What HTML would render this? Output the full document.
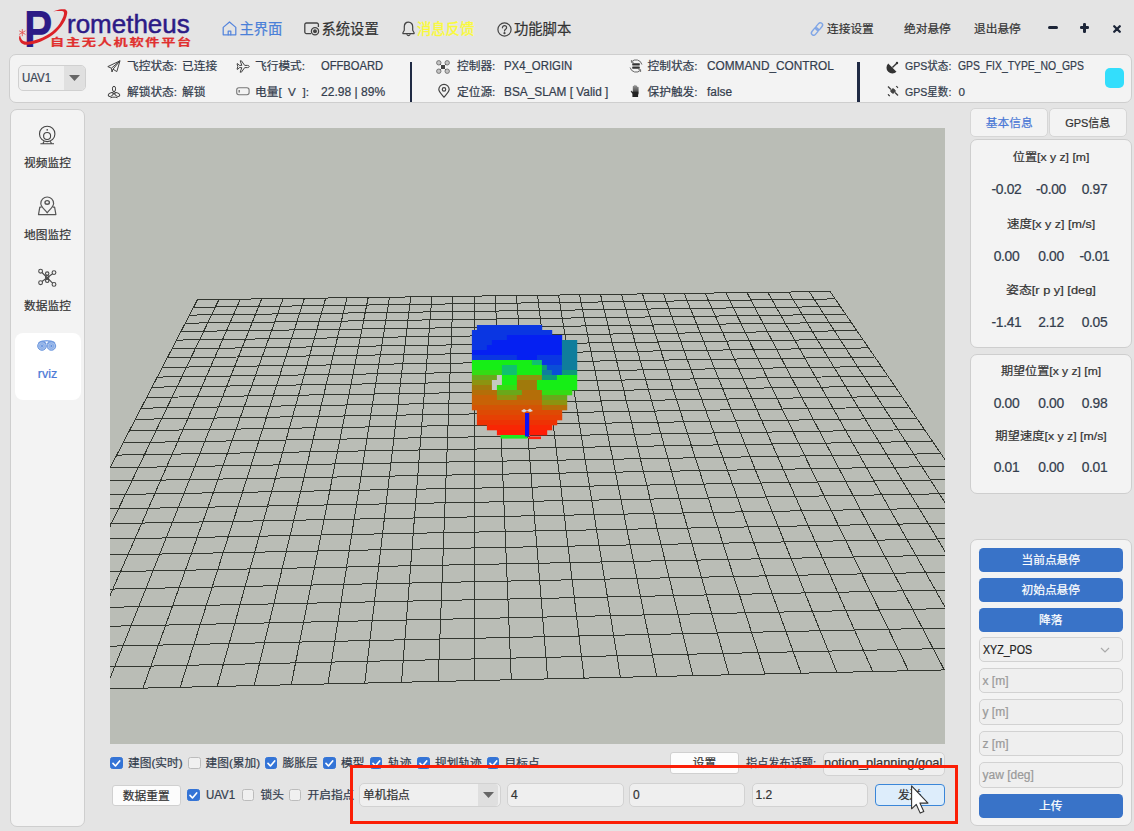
<!DOCTYPE html>
<html lang="zh">
<head>
<meta charset="utf-8">
<title>Prometheus 自主无人机软件平台</title>
<style>
*{box-sizing:border-box;margin:0;padding:0}
html,body{width:1134px;height:831px;overflow:hidden;background:#e4e4e4}
body{position:relative;-webkit-text-stroke:.22px currentColor;font-family:"Liberation Sans","Noto Sans CJK SC",sans-serif;color:#333d4d;font-size:12px}
.a{position:absolute;white-space:nowrap}
.t{position:absolute;white-space:nowrap;line-height:16px;height:16px;font-size:11.7px}
.panel{position:absolute;background:#f3f3f3;border:1px solid #cecece;border-radius:7px}
.nav{position:absolute;white-space:nowrap;font-size:14.3px;line-height:20px;height:20px;top:19px;color:#333}
.ic{position:absolute;overflow:visible}
.cb{position:absolute;width:12.6px;height:12.4px;border:1px solid #bcbcbc;border-radius:2.5px;background:#f0f0f0;margin-left:-.4px}
.cb.on{background:#3474d6;border-color:#3474d6}
.cb.on svg{position:absolute;left:0;top:0}
.btn{position:absolute;background:#3973c8;color:#fff;border-radius:4.5px;text-align:center;font-size:11.7px}
.inp{position:absolute;background:#efefef;border:1px solid #d2d2d2;border-radius:5px;font-size:12px;color:#9a9a9a;padding-left:3px}
.val{position:absolute;letter-spacing:-.3px;font-size:13.8px;line-height:18px;height:18px;width:50px;text-align:center;color:#333d4d}
.hd{position:absolute;font-size:11.7px;line-height:16px;height:16px;width:160px;left:971px;text-align:center;color:#333}
.sb{position:absolute;left:11px;width:73px;text-align:center;font-size:11.7px;line-height:16px;color:#333}
</style>
</head>
<body>
<div class="a" id="logoP" style="left:24.3px;top:1px;font-size:51.8px;line-height:56px;font-weight:700;color:#2c1a86;transform-origin:0 0;transform:scaleX(0.82)">P</div>
<div class="a" id="logoT" style="left:67.2px;top:5.5px;font-size:26.6px;line-height:36px;color:#2c1a86;transform-origin:0 0;transform:scaleX(0.977);-webkit-text-stroke:0.5px #2c1a86">rometheus</div>
<div class="a" id="logoC" style="left:50.3px;top:36.3px;font-size:10px;line-height:13px;font-weight:700;color:#e0302f;transform-origin:0 0;transform:scaleX(1.42);letter-spacing:1.18px">自主无人机软件平台</div>
<svg class="ic" style="left:14px;top:4px" width="60" height="48" viewBox="14 4 60 48"><path d="M53.2 11.3C54.2 11.0 57.5 9.9 59.4 9.5C61.3 9.2 63.4 9.0 64.7 9.3C65.9 9.5 66.5 10.2 66.9 11.0C67.3 11.8 67.4 12.6 67.1 14.1C66.8 15.7 66.1 18.2 65.1 20.3C64.1 22.3 62.7 24.5 61.1 26.5C59.6 28.4 57.9 30.3 55.9 32.2C53.8 34.0 51.3 35.9 48.8 37.5C46.3 39.0 43.5 40.3 40.9 41.4C38.2 42.5 35.4 43.5 32.9 44.1C30.4 44.7 27.8 44.9 25.9 44.8C24.0 44.7 22.6 44.1 21.5 43.2C20.4 42.4 19.6 40.8 19.3 39.7C18.9 38.6 19.1 37.3 19.3 36.6C19.4 35.9 20.0 35.5 20.1 35.3L20.1 35.3C20.3 35.9 20.7 37.9 21.3 38.8C21.8 39.7 22.3 40.4 23.4 40.9C24.5 41.4 25.8 41.8 27.6 41.7C29.5 41.6 32.2 41.0 34.7 40.3C37.2 39.6 40.1 38.5 42.6 37.4C45.1 36.3 47.6 35.0 49.7 33.5C51.8 32.1 53.7 30.3 55.4 28.7C57.1 27.0 58.6 25.2 59.8 23.4C61.1 21.5 62.2 19.3 62.9 17.6C63.6 15.9 64.0 14.3 64.0 13.2C64.0 12.2 63.7 11.7 62.9 11.3C62.1 10.9 61.0 11.0 59.4 11.0C57.8 11.0 54.2 11.2 53.2 11.3Z" fill="#dc2228"/><path d="M22.3 29.4v6.4M19.5 31l5.6 3.2M19.5 34.2l5.6-3.2" stroke="#e85050" stroke-width=".9" stroke-linecap="round"/></svg>

<svg class="ic" style="left:222px;top:21px" width="15" height="15" viewBox="0 0 15 15" fill="none" stroke="#5585dc" stroke-width="1.250" stroke-linejoin="round" stroke-linecap="round"><path d="M1.2 6.4L7.5 1l6.3 5.4v7.4H1.2z"/><path d="M6.2 13.8v-3.8h2.6v3.8"/></svg>
<div class="nav" style="left:239.5px;color:#4a80d8">主界面</div>
<svg class="ic" style="left:304px;top:22px" width="16" height="14" viewBox="0 0 16 14" fill="none" stroke="#444" stroke-width="1.3"><path d="M7 11.6H2.4a1.6 1.6 0 0 1-1.6-1.6V2.6A1.6 1.6 0 0 1 2.4 1h10.4a1.6 1.6 0 0 1 1.6 1.6V5"/><circle cx="11" cy="9.3" r="3.6"/><circle cx="11" cy="9.3" r="1.3" fill="#444"/></svg>
<div class="nav" style="left:321.5px">系统设置</div>
<svg class="ic" style="left:402px;top:21px" width="13" height="16" viewBox="0 0 13 16" fill="none" stroke="#444" stroke-width="1.2" stroke-linejoin="round"><path d="M6.5 1.2c-2.6 0-4.2 2-4.2 4.5v3.6L.9 11.8v.8h11.2v-.8l-1.4-2.5V5.7c0-2.5-1.6-4.5-4.2-4.5z"/><path d="M5 13.6a1.6 1.6 0 0 0 3 0" stroke-linecap="round"/></svg>
<div class="nav" style="left:417px;color:#fafa38;-webkit-text-stroke:.35px #fafa38">消息反馈</div>
<svg class="ic" style="left:497px;top:21.5px" width="15" height="15" viewBox="0 0 15 15" fill="none" stroke="#444" stroke-width="1.2"><circle cx="7.5" cy="7.5" r="6.6"/><path d="M5.4 5.8c0-1.3 1-2.1 2.1-2.1s2.1.8 2.1 2c0 1.5-2.1 1.6-2.1 3.3" stroke-linecap="round"/><circle cx="7.5" cy="11.2" r=".5" fill="#444"/></svg>
<div class="nav" style="left:514px">功能脚本</div>
<svg class="ic" style="left:810px;top:22px" width="14" height="14" viewBox="0 0 14 14" fill="none" stroke="#7fa5e6" stroke-width="1.4"><g transform="rotate(-50 7 7)"><rect x="-.4" y="4.7" width="8.2" height="4.6" rx="2.3"/><rect x="6.2" y="4.7" width="8.2" height="4.6" rx="2.3"/></g></svg>
<div class="t" style="left:827px;top:21px;color:#333">连接设置</div>
<div class="t" style="left:904px;top:21px;color:#333">绝对悬停</div>
<div class="t" style="left:974px;top:21px;color:#333">退出悬停</div>
<div class="a" style="left:1048px;top:26.2px;width:9.6px;height:3.2px;background:#1c2538;border-radius:1.5px"></div>
<div class="a" style="left:1080px;top:26.4px;width:9.4px;height:2.8px;background:#1c2538;border-radius:1.2px"></div>
<div class="a" style="left:1083.3px;top:23px;width:2.8px;height:9.6px;background:#1c2538;border-radius:1.2px"></div>
<svg class="ic" style="left:1113px;top:24.5px" width="8" height="8" viewBox="0 0 8 8" stroke="#1c2538" stroke-width="2.3" stroke-linecap="round"><path d="M1.2 1.2l5.6 5.6M6.8 1.2L1.2 6.8"/></svg>

<div class="panel" style="left:9px;top:53.5px;width:1123px;height:49.5px"></div>
<div class="a" style="left:18px;top:65px;width:68px;height:25.5px;border:1px solid #d0d0d0;border-radius:5px;background:#f0f0f0"></div>
<div class="a" style="left:64px;top:66px;width:21px;height:23.5px;background:#e0e0e0;border-radius:0 4px 4px 0"></div>
<div class="t" style="transform:scaleX(0.957);transform-origin:0 50%;left:22px;top:69.5px;font-size:12px;color:#3b4656">UAV1</div>
<svg class="ic" style="left:68.5px;top:75px" width="11" height="6" viewBox="0 0 11 6"><path d="M0 0h11L5.5 6z" fill="#666"/></svg>

<svg class="ic" style="left:107px;top:60px" width="14" height="13" viewBox="0 0 14 13" fill="none" stroke="#444" stroke-width="1" stroke-linejoin="round"><path d="M13 .8L.8 6.6l3.6 1.6zM13 .8L6 9.2l3.8 2.4zM4.4 8.2L5 12l1-2.8"/></svg>
<div class="t" style="left:127px;top:58px">飞控状态:</div>
<div class="t" style="left:182px;top:58px">已连接</div>
<svg class="ic" style="left:107px;top:84.5px" width="14" height="14" viewBox="0 0 14 14" fill="none" stroke="#444" stroke-width="1"><g transform="translate(7 7.6)"><circle r="1.2"/><ellipse cx="0" cy="-3.7" rx="1.6" ry="2.7"/><ellipse cx="0" cy="-3.7" rx="1.6" ry="2.7" transform="rotate(120)"/><ellipse cx="0" cy="-3.7" rx="1.6" ry="2.7" transform="rotate(240)"/></g><path d="M3.4 12.8c2.4-.9 4.8-.9 7.2 0"/></svg>
<div class="t" style="left:127px;top:83.7px">解锁状态:</div>
<div class="t" style="left:182px;top:83.7px">解锁</div>

<svg class="ic" style="left:236px;top:60px" width="14" height="13" viewBox="0 0 14 13" fill="none" stroke="#444" stroke-width="1" stroke-linejoin="round"><path d="M13.2 6.5c0-.8-.9-1.1-1.7-1.1H8.7L5.4.8H4.2l1.6 4.6H3.3L2 3.8H1l.8 2.7L1 9.2h1l1.3-1.6h2.5L4.2 12.2h1.2l3.3-4.6h2.8c.8 0 1.7-.3 1.7-1.1z"/></svg>
<div class="t" style="left:255px;top:58px">飞行模式:</div>
<div class="t" style="transform:scaleX(0.91);transform-origin:0 50%;left:321px;top:58px;font-size:12.3px">OFFBOARD</div>
<svg class="ic" style="left:236px;top:86.5px" width="14" height="9" viewBox="0 0 14 9" fill="none" stroke="#777" stroke-width="1.1"><rect x=".7" y=".7" width="12.4" height="7" rx="2.2"/><path d="M3.2 3v2.4" stroke-width="1.4"/></svg>
<div class="t" style="left:255px;top:83.7px">电量[&nbsp; V &nbsp;]:</div>
<div class="t" style="transform:scaleX(0.98);transform-origin:0 50%;left:321px;top:83.7px;font-size:12.3px">22.98 | 89%</div>

<div class="a" style="left:409.6px;top:62px;width:2.8px;height:40px;background:#1f2a44"></div>

<svg class="ic" style="left:436px;top:59.5px" width="14" height="14" viewBox="0 0 14 14" fill="none" stroke="#555" stroke-width="1"><g fill="#c4c4c4" stroke="#777"><circle cx="2.8" cy="2.8" r="2.2"/><circle cx="11.2" cy="2.8" r="2.2"/><circle cx="2.8" cy="11.2" r="2.2"/><circle cx="11.2" cy="11.2" r="2.2"/></g><path d="M4.2 4.2l5.6 5.6M9.8 4.2L4.2 9.8"/><rect x="5" y="5" width="4" height="4" fill="#444" stroke="none"/></svg>
<div class="t" style="left:457px;top:58px">控制器:</div>
<div class="t" style="transform:scaleX(0.926);transform-origin:0 50%;left:503.5px;top:58px;font-size:12.3px">PX4_ORIGIN</div>
<svg class="ic" style="left:437.5px;top:84px" width="12" height="14" viewBox="0 0 12 14" fill="none" stroke="#444" stroke-width="1.2"><path d="M6 13.2C3 9.6.8 7.6.8 5.6a5.2 5.2 0 0 1 10.4 0c0 2-2.2 4-5.2 7.6z"/><circle cx="6" cy="5.4" r="1.7"/></svg>
<div class="t" style="left:457px;top:83.7px">定位源:</div>
<div class="t" style="transform:scaleX(0.962);transform-origin:0 50%;left:503.5px;top:83.7px;font-size:12.3px">BSA_SLAM [ Valid ]</div>

<svg class="ic" style="left:629px;top:58.8px" width="14" height="14" viewBox="0 0 14 14" fill="none" stroke="#666" stroke-width="1"><path d="M2.3 3A6.1 6.1 0 0 1 12.9 5.5M11.7 11A6.1 6.1 0 0 1 1.1 8.5"/><path d="M2.4 1v2.3h2.3M11.6 13v-2.3H9.3" stroke-width=".9"/><rect x="3.2" y="4.3" width="7.6" height="2.1" rx=".4" fill="#333" stroke="none"/><rect x="3.2" y="7.6" width="7.6" height="2.1" rx=".4" fill="#333" stroke="none"/></svg>
<div class="t" style="left:647.5px;top:58px">控制状态:</div>
<div class="t" style="transform:scaleX(0.962);transform-origin:0 50%;left:706.5px;top:58px;font-size:12.3px">COMMAND_CONTROL</div>
<svg class="ic" style="left:629.5px;top:84.2px" width="11" height="14" viewBox="0 0 11 14"><defs><linearGradient id="hg" x1="0" y1="0" x2="0" y2="1"><stop offset="0" stop-color="#999"/><stop offset=".5" stop-color="#555"/><stop offset=".62" stop-color="#222"/><stop offset="1" stop-color="#222"/></linearGradient></defs><path d="M2.4 13V9.8L.9 7.8c-.5-.7.4-1.4 1-.8l.9.9V2.4c0-1 1.4-1 1.4 0V1.5c0-1 1.5-1 1.5 0v.8c0-1 1.5-1 1.5 0v1c0-.9 1.4-.9 1.4 0V9.6l-.5 1.4v2z" fill="url(#hg)"/></svg>
<div class="t" style="left:647.5px;top:83.7px">保护触发:</div>
<div class="t" style="transform:scaleX(0.966);transform-origin:0 50%;left:706.5px;top:83.7px;font-size:12.3px">false</div>

<div class="a" style="left:857.2px;top:62px;width:2.8px;height:40px;background:#1f2a44"></div>

<svg class="ic" style="left:886.5px;top:60.5px" width="12" height="12" viewBox="0 0 12 12"><path d="M1.2 2.5A5.8 5.8 0 0 0 9.5 10.8z" fill="#333"/><path d="M5.4 6.6L9.8 2.2" stroke="#333" stroke-width="1.4"/><circle cx="10" cy="2" r="1.2" fill="#333"/></svg>
<div class="t" style="transform:scaleX(0.903);transform-origin:0 50%;left:905px;top:58px">GPS状态:</div>
<div class="t" style="transform:scaleX(0.845);transform-origin:0 50%;left:958px;top:58px;font-size:12.3px">GPS_FIX_TYPE_NO_GPS</div>
<svg class="ic" style="left:886.5px;top:85px" width="12" height="12" viewBox="0 0 12 12" fill="none" stroke="#444" stroke-width="1.2"><path d="M1 1.5l3 3M8 7.5l3 3M4.5 7.5l3-3" stroke-width="1.4"/><rect x="3.8" y="3.8" width="4.4" height="4.4" transform="rotate(45 6 6)" fill="#444" stroke="none"/><path d="M1.2 9.2c.2 1 .8 1.5 1.7 1.7M9 1.2c1 .3 1.6.9 1.8 1.8"/></svg>
<div class="t" style="transform:scaleX(0.903);transform-origin:0 50%;left:905px;top:83.7px">GPS星数:</div>
<div class="t" style="left:958.5px;top:83.7px">0</div>
<div class="a" style="left:1104.5px;top:68px;width:19.5px;height:19.5px;border-radius:5px;background:#33defc"></div>

<div class="panel" style="left:10px;top:109px;width:74.5px;height:717.5px"></div>
<svg class="ic" style="left:38px;top:124.5px" width="19" height="20" viewBox="0 0 19 20" fill="none" stroke="#444" stroke-width="1.1"><circle cx="9.2" cy="8.9" r="7.7"/><circle cx="9.1" cy="11" r="3.5"/><circle cx="9.2" cy="4.9" r=".8" fill="#444" stroke="none"/><path d="M6.2 16.2L5 18.3M12.2 16.2L13.4 18.3M2.4 18.7H16" stroke-linejoin="round"/></svg>
<div class="sb" style="top:154.5px">视频监控</div>
<svg class="ic" style="left:38px;top:196px" width="19" height="20" viewBox="0 0 19 20" fill="none" stroke="#555" stroke-width="1.2" stroke-linejoin="round"><path d="M9.2 16.8C5.5 12.4 2.8 10.4 2.8 7.4a6.4 6.4 0 0 1 12.8 0c0 3-2.7 5-6.4 9.4z"/><ellipse cx="9.2" cy="6.4" rx="2.2" ry="1.8" stroke-width="1.4"/><path d="M3.6 11.2H1.8L.5 18.6h17.4l-1.3-7.4h-1.8"/></svg>
<div class="sb" style="top:226.5px">地图监控</div>
<svg class="ic" style="left:38px;top:268px" width="19" height="20" viewBox="0 0 19 20" fill="none" stroke="#4a4a4a" stroke-width="1.1"><circle cx="2.6" cy="3.2" r="1.9"/><circle cx="16" cy="4.6" r="1.9"/><circle cx="2.6" cy="14.7" r="1.9"/><circle cx="16" cy="16.4" r="1.9"/><circle cx="9.2" cy="5.6" r="1.7"/><circle cx="9.2" cy="9.2" r="1.7"/><circle cx="9.2" cy="12.8" r="1.7"/><path d="M4 4.5L14.6 15.2M14.6 5.8L4 13.5"/></svg>
<div class="sb" style="top:298px">数据监控</div>
<div class="a" style="left:14.5px;top:333px;width:66.5px;height:67px;border-radius:8px;background:#fff"></div>
<svg class="ic" style="left:37px;top:339px" width="20" height="13" viewBox="0 0 20 13"><path d="M1 3.4C3.5 1.8 6.6 1 9.7 1s6.2.8 8.7 2.4l-2 1.5H3z" fill="#7ea4e4"/><path d="M8.2 2.6L9.7 5l1.5-2.4z" fill="#fff"/><circle cx="5" cy="7" r="4.3" fill="#a4c0ec" stroke="#6b96de" stroke-width="1"/><circle cx="14.4" cy="7" r="4.3" fill="#a4c0ec" stroke="#6b96de" stroke-width="1"/><circle cx="5" cy="7" r="2.3" fill="none" stroke="#7ea4e4" stroke-width=".7"/><circle cx="14.4" cy="7" r="2.3" fill="none" stroke="#7ea4e4" stroke-width=".7"/><circle cx="5" cy="7" r=".9" fill="#5b8bdb"/><circle cx="14.4" cy="7" r=".9" fill="#5b8bdb"/></svg>
<div class="sb" style="top:366px;color:#4a78d6;font-size:12.5px">rviz</div>

<div class="a" style="left:110px;top:127.7px;width:835px;height:616.8px;background:#babdb6;overflow:hidden">
<svg class="ic" style="left:0;top:.3px" width="835" height="617" viewBox="110 128 835 617">
<path d="M197.5 299.7L-6.2 691.5M197.5 299.7L830.1 291.5M219.0 299.4L31.2 690.6M193.6 307.3L835.2 298.9M240.4 299.1L68.5 689.8M189.5 315.1L840.4 306.5M261.7 298.8L105.8 688.9M185.3 323.2L845.7 314.3M283.1 298.6L143.0 688.1M181.0 331.5L851.2 322.3M304.4 298.3L180.2 687.2M176.5 340.1L856.8 330.6M325.7 298.0L217.2 686.4M171.9 348.9L862.7 339.1M347.0 297.7L254.2 685.6M167.2 358.0L868.7 347.9M368.2 297.5L291.2 684.7M162.3 367.4L874.9 357.0M389.5 297.2L328.0 683.9M157.2 377.1L881.3 366.4M410.7 296.9L364.8 683.1M152.0 387.2L887.9 376.0M431.9 296.6L401.5 682.2M146.6 397.5L894.7 386.0M453.0 296.4L438.2 681.4M141.1 408.2L901.8 396.3M474.2 296.1L474.8 680.6M135.3 419.3L909.1 407.0M495.3 295.8L511.3 679.7M129.3 430.8L916.6 418.1M516.4 295.5L547.7 678.9M123.1 442.7L924.4 429.5M537.5 295.3L584.1 678.1M116.7 455.1L932.5 441.3M558.5 295.0L620.4 677.2M110.1 467.8L940.9 453.6M579.5 294.7L656.7 676.4M103.2 481.1L949.6 466.3M600.5 294.4L692.9 675.6M96.0 494.9L958.6 479.5M621.5 294.2L729.0 674.8M88.5 509.3L968.0 493.3M642.5 293.9L765.0 674.0M80.8 524.2L977.7 507.5M663.4 293.6L801.0 673.1M72.7 539.7L987.9 522.4M684.3 293.4L836.9 672.3M64.3 555.9L998.4 537.8M705.2 293.1L872.8 671.5M55.5 572.8L1009.4 553.9M726.1 292.8L908.5 670.7M46.3 590.4L1020.9 570.7M747.0 292.6L944.3 669.9M36.8 608.8L1032.9 588.2M767.8 292.3L979.9 669.1M26.8 628.0L1045.4 606.5M788.6 292.0L1015.5 668.3M16.3 648.2L1058.4 625.6M809.4 291.8L1051.0 667.5M5.3 669.3L1072.1 645.7M830.1 291.5L1086.5 666.7M-6.2 691.5L1086.5 666.7" fill="none" shape-rendering="crispEdges" stroke="#32362f" stroke-width="1.0"/>
<rect x="476.9" y="325.0" width="65.3" height="5.3" fill="#0a36e2"/>
<rect x="471.9" y="330.0" width="80.3" height="5.3" fill="#0a36e2"/>
<rect x="471.9" y="335.0" width="35.3" height="5.3" fill="#0a36e2"/>
<rect x="506.9" y="335.0" width="55.3" height="5.3" fill="#0520f2"/>
<rect x="471.9" y="340.0" width="20.3" height="5.3" fill="#0a36e2"/>
<rect x="491.9" y="340.0" width="70.3" height="5.3" fill="#0520f2"/>
<rect x="561.9" y="340.0" width="15.3" height="5.3" fill="#0f7d9c"/>
<rect x="471.9" y="345.0" width="15.3" height="5.3" fill="#0a36e2"/>
<rect x="486.9" y="345.0" width="75.3" height="5.3" fill="#0520f2"/>
<rect x="561.9" y="345.0" width="15.3" height="5.3" fill="#0f7d9c"/>
<rect x="471.9" y="350.0" width="90.3" height="5.3" fill="#0520f2"/>
<rect x="561.9" y="350.0" width="15.3" height="5.3" fill="#0f7d9c"/>
<rect x="471.9" y="355.0" width="45.3" height="5.3" fill="#0a36e2"/>
<rect x="516.9" y="355.0" width="20.3" height="5.3" fill="#0520f2"/>
<rect x="536.9" y="355.0" width="25.3" height="5.3" fill="#0a36e2"/>
<rect x="561.9" y="355.0" width="15.3" height="5.3" fill="#0f7d9c"/>
<rect x="471.9" y="360.0" width="60.3" height="5.3" fill="#16ee16"/>
<rect x="531.9" y="360.0" width="10.3" height="5.3" fill="#10c070"/>
<rect x="541.9" y="360.0" width="20.3" height="5.3" fill="#0a36e2"/>
<rect x="561.9" y="360.0" width="15.3" height="5.3" fill="#0f7d9c"/>
<rect x="471.9" y="365.0" width="30.3" height="5.3" fill="#16ee16"/>
<rect x="501.9" y="365.0" width="15.3" height="5.3" fill="#10c070"/>
<rect x="516.9" y="365.0" width="25.3" height="5.3" fill="#16ee16"/>
<rect x="541.9" y="365.0" width="5.3" height="5.3" fill="#0c9a78"/>
<rect x="546.9" y="365.0" width="15.3" height="5.3" fill="#0a4ed6"/>
<rect x="561.9" y="365.0" width="15.3" height="5.3" fill="#0f7d9c"/>
<rect x="471.9" y="370.0" width="30.3" height="5.3" fill="#34dc14"/>
<rect x="501.9" y="370.0" width="15.3" height="5.3" fill="#10c070"/>
<rect x="516.9" y="370.0" width="25.3" height="5.3" fill="#16ee16"/>
<rect x="541.9" y="370.0" width="10.3" height="5.3" fill="#0f7d9c"/>
<rect x="551.9" y="370.0" width="10.3" height="5.3" fill="#0a4ed6"/>
<rect x="561.9" y="370.0" width="15.3" height="5.3" fill="#0c9a78"/>
<rect x="471.9" y="375.0" width="25.3" height="5.3" fill="#6aa81a"/>
<rect x="496.9" y="375.0" width="5.3" height="5.3" fill="#c6c9c2"/>
<rect x="501.9" y="375.0" width="15.3" height="5.3" fill="#16ee16"/>
<rect x="516.9" y="375.0" width="25.3" height="5.3" fill="#8c9410"/>
<rect x="541.9" y="375.0" width="15.3" height="5.3" fill="#0c9a78"/>
<rect x="556.9" y="375.0" width="20.3" height="5.3" fill="#16ee16"/>
<rect x="471.9" y="380.0" width="20.3" height="5.3" fill="#8c9410"/>
<rect x="491.9" y="380.0" width="10.3" height="5.3" fill="#c6c9c2"/>
<rect x="501.9" y="380.0" width="15.3" height="5.3" fill="#16ee16"/>
<rect x="516.9" y="380.0" width="20.3" height="5.3" fill="#a07a0c"/>
<rect x="536.9" y="380.0" width="40.3" height="5.3" fill="#16ee16"/>
<rect x="471.9" y="385.0" width="20.3" height="5.3" fill="#a07a0c"/>
<rect x="491.9" y="385.0" width="5.3" height="5.3" fill="#c6c9c2"/>
<rect x="496.9" y="385.0" width="20.3" height="5.3" fill="#34dc14"/>
<rect x="516.9" y="385.0" width="20.3" height="5.3" fill="#a07a0c"/>
<rect x="536.9" y="385.0" width="40.3" height="5.3" fill="#16ee16"/>
<rect x="471.9" y="390.0" width="25.3" height="5.3" fill="#b46e08"/>
<rect x="496.9" y="390.0" width="25.3" height="5.3" fill="#6aa81a"/>
<rect x="521.9" y="390.0" width="20.3" height="5.3" fill="#b46e08"/>
<rect x="541.9" y="390.0" width="30.3" height="5.3" fill="#34dc14"/>
<rect x="471.9" y="395.0" width="25.3" height="5.3" fill="#c86206"/>
<rect x="496.9" y="395.0" width="20.3" height="5.3" fill="#8c9410"/>
<rect x="516.9" y="395.0" width="25.3" height="5.3" fill="#b46e08"/>
<rect x="541.9" y="395.0" width="25.3" height="5.3" fill="#6aa81a"/>
<rect x="471.9" y="400.0" width="20.3" height="5.3" fill="#c86206"/>
<rect x="491.9" y="400.0" width="50.3" height="5.3" fill="#c86206"/>
<rect x="541.9" y="400.0" width="25.3" height="5.3" fill="#8c9410"/>
<rect x="471.9" y="405.0" width="70.3" height="5.3" fill="#d45405"/>
<rect x="541.9" y="405.0" width="25.3" height="5.3" fill="#b46e08"/>
<rect x="476.9" y="410.0" width="85.3" height="5.3" fill="#de4a04"/>
<rect x="476.9" y="415.0" width="85.3" height="5.3" fill="#e64004"/>
<rect x="476.9" y="420.0" width="80.3" height="5.3" fill="#ee3204"/>
<rect x="486.9" y="425.0" width="65.3" height="5.3" fill="#f82604"/>
<rect x="496.9" y="430.0" width="50.3" height="5.3" fill="#ff1c06"/>
<rect x="500.5" y="435" width="27" height="3.6" fill="#20e820"/>
<rect x="528.5" y="436.5" width="12.5" height="2.6" fill="#ff2010"/>
<rect x="525" y="413" width="4.2" height="23.5" fill="#1010f0"/>
<path d="M521 411l3-2 3 1.5 3-2 3 2.5-3 1-3-1-3 1.5z" fill="#d8d8d8"/>
</svg></div>
<div class="a" style="left:970px;top:108px;width:78px;height:28.5px;background:#f3f3f3;border:1px solid #d6d6d6;border-radius:5px"></div>
<div class="a" style="left:1048.8px;top:108px;width:78px;height:28.5px;background:#f3f3f3;border:1px solid #d6d6d6;border-radius:5px"></div>
<div class="t" style="left:970.5px;width:77.5px;text-align:center;top:114.5px;color:#4a78d6">基本信息</div>
<div class="t" style="transform:scaleX(0.94);transform-origin:50% 50%;left:1049px;width:77.5px;text-align:center;top:114.5px;color:#333">GPS信息</div>
<div class="panel" style="left:970px;top:139px;width:161.5px;height:209.3px"></div>
<div class="hd" style="transform:scaleX(1.045);transform-origin:50% 50%;top:148.5px">位置[x y z] [m]</div>
<div class="val" style="left:981.5px;top:180.5px">-0.02</div><div class="val" style="left:1026px;top:180.5px">-0.00</div><div class="val" style="left:1069.5px;top:180.5px">0.97</div>
<div class="hd" style="transform:scaleX(1.07);transform-origin:50% 50%;top:215.5px">速度[x y z] [m/s]</div>
<div class="val" style="left:981.5px;top:247.5px">0.00</div><div class="val" style="left:1026px;top:247.5px">0.00</div><div class="val" style="left:1069.5px;top:247.5px">-0.01</div>
<div class="hd" style="transform:scaleX(1.097);transform-origin:50% 50%;top:281.5px">姿态[r p y] [deg]</div>
<div class="val" style="left:981.5px;top:313.5px">-1.41</div><div class="val" style="left:1026px;top:313.5px">2.12</div><div class="val" style="left:1069.5px;top:313.5px">0.05</div>
<div class="panel" style="left:970px;top:353.8px;width:161.5px;height:139.8px"></div>
<div class="hd" style="transform:scaleX(1.036);transform-origin:50% 50%;top:363px">期望位置[x y z] [m]</div>
<div class="val" style="left:981.5px;top:395px">0.00</div><div class="val" style="left:1026px;top:395px">0.00</div><div class="val" style="left:1069.5px;top:395px">0.98</div>
<div class="hd" style="transform:scaleX(1.053);transform-origin:50% 50%;top:427.5px">期望速度[x y z] [m/s]</div>
<div class="val" style="left:981.5px;top:459px">0.01</div><div class="val" style="left:1026px;top:459px">0.00</div><div class="val" style="left:1069.5px;top:459px">0.01</div>
<div class="panel" style="left:970px;top:539px;width:161.5px;height:287.3px"></div>
<div class="btn" style="left:978.5px;top:548px;width:144.5px;height:23.6px;line-height:23.6px">当前点悬停</div>
<div class="btn" style="left:978.5px;top:578px;width:144.5px;height:23.6px;line-height:23.6px">初始点悬停</div>
<div class="btn" style="left:978.5px;top:608px;width:144.5px;height:23.6px;line-height:23.6px">降落</div>
<div class="inp" style="left:978.5px;top:636.8px;width:144.5px;height:25.5px;line-height:24.5px;color:#222;font-size:12.3px"><span style="display:inline-block;transform:scaleX(.865);transform-origin:0 50%">XYZ_POS</span></div>
<svg class="ic" style="left:1100px;top:646.5px" width="10" height="6" viewBox="0 0 10 6" fill="none" stroke="#aaa" stroke-width="1.2"><path d="M1 1l4 4 4-4"/></svg>
<div class="inp" style="left:978.5px;top:667.8px;width:144.5px;height:25.5px;line-height:24.5px">x [m]</div>
<div class="inp" style="left:978.5px;top:699.3px;width:144.5px;height:25.5px;line-height:24.5px">y [m]</div>
<div class="inp" style="left:978.5px;top:730.8px;width:144.5px;height:25.5px;line-height:24.5px">z [m]</div>
<div class="inp" style="left:978.5px;top:762.3px;width:144.5px;height:25.5px;line-height:24.5px">yaw [deg]</div>
<div class="btn" style="left:978.5px;top:794.3px;width:144.5px;height:23.6px;line-height:23.6px">上传</div>

<div class="cb on" style="left:110.5px;top:757px"><svg width="10.5" height="10.5" viewBox="0 0 12 12" fill="none" stroke="#fff" stroke-width="1.9" stroke-linecap="round" stroke-linejoin="round"><path d="M2.3 6.2l2.8 2.9 4.8-5.7"/></svg></div><div class="t" style="left:128px;top:755px">建图(实时)</div>
<div class="cb" style="left:188.5px;top:757px"></div><div class="t" style="left:205.5px;top:755px">建图(累加)</div>
<div class="cb on" style="left:265px;top:757px"><svg width="10.5" height="10.5" viewBox="0 0 12 12" fill="none" stroke="#fff" stroke-width="1.9" stroke-linecap="round" stroke-linejoin="round"><path d="M2.3 6.2l2.8 2.9 4.8-5.7"/></svg></div><div class="t" style="left:282.5px;top:755px">膨胀层</div>
<div class="cb on" style="left:323.5px;top:757px"><svg width="10.5" height="10.5" viewBox="0 0 12 12" fill="none" stroke="#fff" stroke-width="1.9" stroke-linecap="round" stroke-linejoin="round"><path d="M2.3 6.2l2.8 2.9 4.8-5.7"/></svg></div><div class="t" style="left:341px;top:755px">模型</div>
<div class="cb on" style="left:370px;top:757px"><svg width="10.5" height="10.5" viewBox="0 0 12 12" fill="none" stroke="#fff" stroke-width="1.9" stroke-linecap="round" stroke-linejoin="round"><path d="M2.3 6.2l2.8 2.9 4.8-5.7"/></svg></div><div class="t" style="left:388px;top:755px">轨迹</div>
<div class="cb on" style="left:417.5px;top:757px"><svg width="10.5" height="10.5" viewBox="0 0 12 12" fill="none" stroke="#fff" stroke-width="1.9" stroke-linecap="round" stroke-linejoin="round"><path d="M2.3 6.2l2.8 2.9 4.8-5.7"/></svg></div><div class="t" style="left:435px;top:755px">规划轨迹</div>
<div class="cb on" style="left:487px;top:757px"><svg width="10.5" height="10.5" viewBox="0 0 12 12" fill="none" stroke="#fff" stroke-width="1.9" stroke-linecap="round" stroke-linejoin="round"><path d="M2.3 6.2l2.8 2.9 4.8-5.7"/></svg></div><div class="t" style="left:504.5px;top:755px">目标点</div>
<div class="a" style="left:670px;top:752px;width:69px;height:22px;background:#fcfcfc;border:1px solid #d0d0d0;border-radius:3px;text-align:center;line-height:20px;font-size:11.7px;color:#333">设置</div>
<div class="t" style="transform:scaleX(0.955);transform-origin:0 50%;left:746px;top:755px">指点发布话题:</div>
<div class="inp" style="left:823px;top:751.5px;width:122px;height:24.5px;line-height:20px;color:#333;font-size:12.7px;padding-left:0;overflow:hidden"><span style="display:inline-block;transform:scaleX(1.01);transform-origin:0 50%">notion_planning/goal</span></div>

<div class="a" style="left:112px;top:784.5px;width:68.5px;height:21px;background:#fcfcfc;border:1px solid #d0d0d0;border-radius:3px;text-align:center;line-height:19px;font-size:11.7px;color:#333">数据重置</div>
<div class="cb on" style="left:187.5px;top:788.5px"><svg width="10.5" height="10.5" viewBox="0 0 12 12" fill="none" stroke="#fff" stroke-width="1.9" stroke-linecap="round" stroke-linejoin="round"><path d="M2.3 6.2l2.8 2.9 4.8-5.7"/></svg></div><div class="t" style="transform:scaleX(0.957);transform-origin:0 50%;left:206px;top:787px;font-size:12px">UAV1</div>
<div class="cb" style="left:242px;top:788.5px"></div><div class="t" style="left:260.5px;top:787px">锁头</div>
<div class="cb" style="left:289px;top:788.5px"></div><div class="t" style="left:307.5px;top:787px">开启指点</div>
<div class="inp" style="left:359px;top:782.5px;width:141.5px;height:24.5px;line-height:22px;color:#333;font-size:11.7px">单机指点</div>
<div class="a" style="left:478px;top:784px;width:20px;height:21.5px;background:#dfdfdf;border-radius:0 3px 3px 0"></div>
<svg class="ic" style="left:482.5px;top:791.5px" width="11" height="6" viewBox="0 0 11 6"><path d="M0 0h11L5.5 6z" fill="#666"/></svg>
<div class="inp" style="left:507px;top:782.5px;width:116.5px;height:24.5px;line-height:22px;color:#333">4</div>
<div class="inp" style="left:629px;top:782.5px;width:116px;height:24.5px;line-height:22px;color:#333">0</div>
<div class="inp" style="left:751.5px;top:782.5px;width:116.5px;height:24.5px;line-height:22px;color:#333">1.2</div>
<div class="a" style="left:874.5px;top:784px;width:70.2px;height:22px;background:#ddedfb;border:1px solid #3a86d8;border-radius:4px;text-align:center;line-height:20px;font-size:11.7px;color:#333">发送</div>
<div class="a" style="left:350px;top:765px;width:608px;height:58.8px;border:3.3px solid #fb1e06"></div>
<svg class="ic" style="left:910px;top:784px" width="22" height="32" viewBox="-1.6 -1.9 22 32"><path d="M0 0V22.9L4.7 18.5 8.6 27.2 12.2 25.6 8.3 17.2H16.4Z" fill="#fff" stroke="#333" stroke-width="1.1" stroke-linejoin="round"/></svg>

</body>
</html>
